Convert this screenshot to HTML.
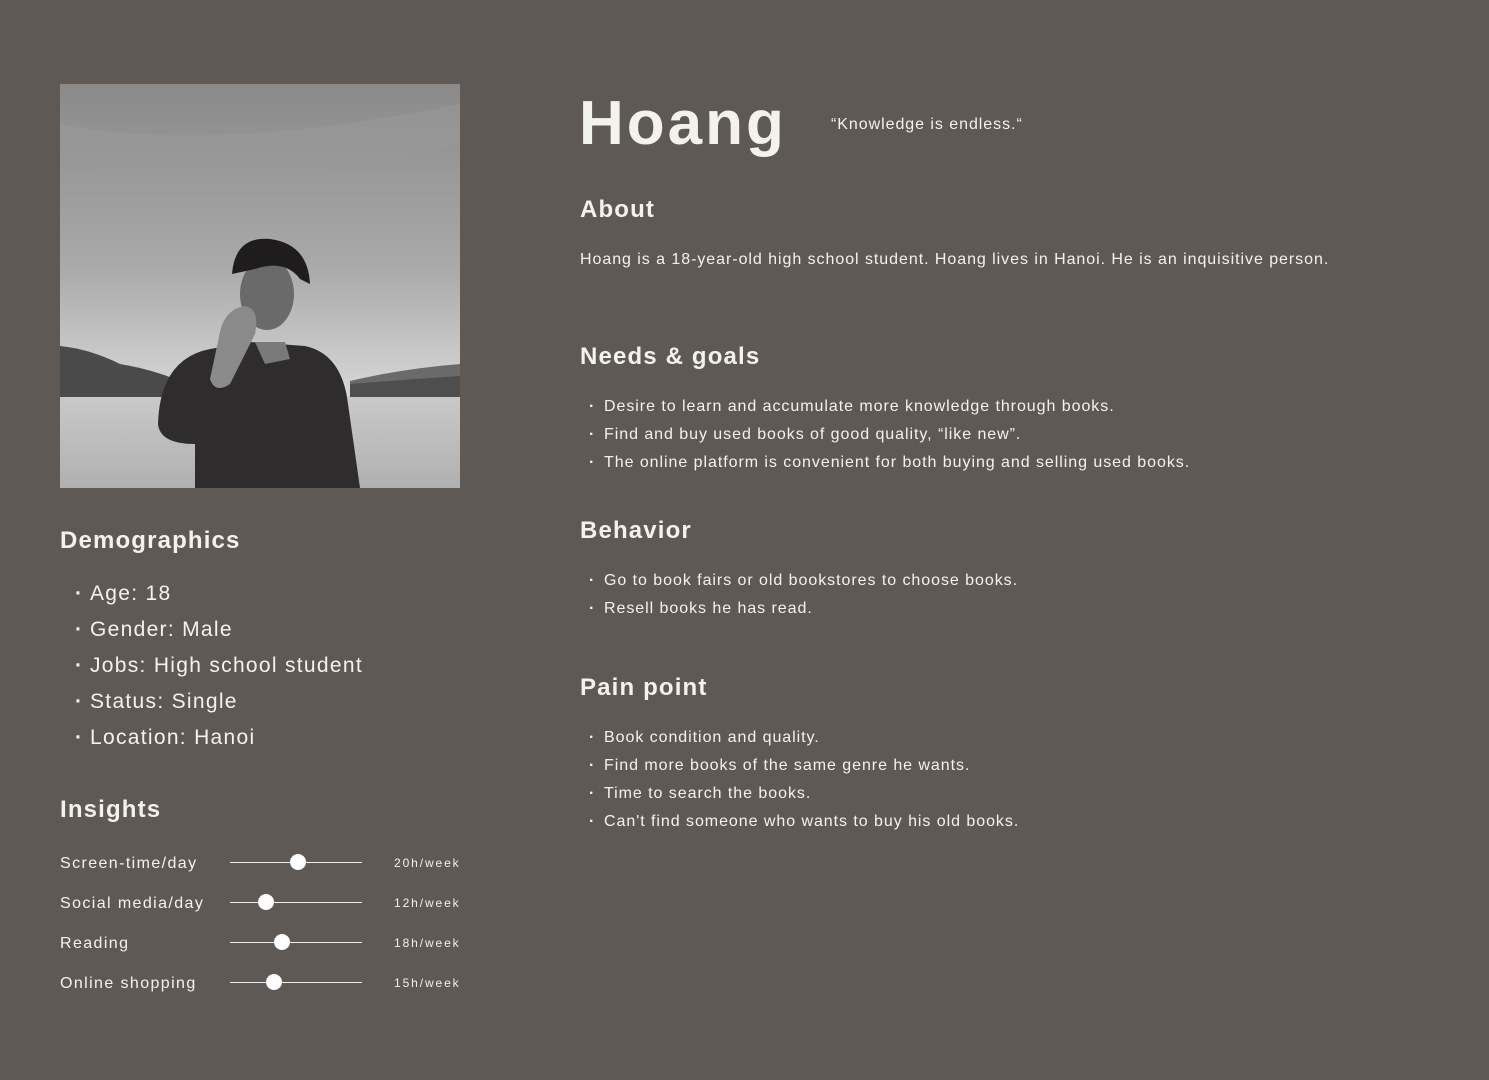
<!DOCTYPE html>
<html><head><meta charset="utf-8"><style>
*{margin:0;padding:0;box-sizing:border-box}
body{width:1489px;height:1080px;background:#5e5955;font-family:"Liberation Sans",sans-serif;color:#f4f2ef;position:relative;overflow:hidden}
.a{position:absolute;white-space:nowrap}
h1{font-size:62px;font-weight:bold;letter-spacing:3px}
.h{font-size:24px;font-weight:bold;letter-spacing:1.15px}
.t{font-size:16px;letter-spacing:.95px}
.d{font-size:21px;letter-spacing:1.3px}
.b::before{content:"·";position:absolute;left:-15px;font-weight:bold}
.s{font-size:16px;letter-spacing:1.4px}
.sl{position:absolute;left:230px;width:132px;height:1px;background:#eee}
.k{position:absolute;width:16px;height:16px;border-radius:50%;background:#fff;top:-8px}
.w{font-size:12px;left:394px;letter-spacing:1.9px}
</style></head><body>
<svg class="a" style="left:60px;top:84px" width="400" height="404" viewBox="0 0 400 404">
<defs><linearGradient id="sk" x1="0" y1="0" x2="0" y2="1"><stop offset="0" stop-color="#8a8a8a"/><stop offset=".45" stop-color="#a9a9a9"/><stop offset=".75" stop-color="#d4d4d4"/></linearGradient>
<linearGradient id="wa" x1="0" y1="0" x2="0" y2="1"><stop offset="0" stop-color="#c9c9c9"/><stop offset="1" stop-color="#b0b0b0"/></linearGradient></defs>
<rect width="400" height="404" fill="url(#sk)"/>
<path d="M0 40 Q150 70 400 20 L400 60 Q200 110 0 80Z" fill="#9a9a9a" opacity=".5"/>
<path d="M0 262 Q30 265 60 280 Q90 285 115 295 L115 313 L0 313Z" fill="#4a4a4a"/>
<path d="M290 297 Q340 285 400 280 L400 318 L290 318Z" fill="#6a6a6a"/>
<path d="M290 300 Q340 296 400 292 L400 318 L290 318Z" fill="#4e4e4e"/>
<rect y="313" width="400" height="91" fill="url(#wa)"/>
<path d="M98 340 Q100 275 150 265 L190 258 L245 262 Q282 270 288 320 L300 404 L135 404 L135 360 Q100 360 98 340Z" fill="#2e2c2c"/>
<path d="M195 258 L225 258 L230 275 L205 280Z" fill="#7a7a7a"/>
<ellipse cx="207" cy="210" rx="27" ry="36" fill="#6a6a6a"/>
<path d="M172 190 Q175 152 210 155 Q248 160 250 200 L240 195 Q225 175 195 185 Z" fill="#1e1c1c"/>
<path d="M160 248 Q165 225 185 222 Q200 225 195 250 L170 300 Q155 310 150 295Z" fill="#8a8a8a"/>
</svg>
<h1 class="a" style="left:579px;top:88px">Hoang</h1>
<div class="a t" style="left:831px;top:116px">“Knowledge is endless.“</div>
<div class="a h" style="left:580px;top:196px">About</div>
<div class="a t" style="left:580px;top:251px">Hoang is a 18-year-old high school student. Hoang lives in Hanoi. He is an inquisitive person.</div>
<div class="a h" style="left:580px;top:343px">Needs &amp; goals</div>
<div class="a t b" style="left:604px;top:398px">Desire to learn and accumulate more knowledge through books.</div>
<div class="a t b" style="left:604px;top:426px">Find and buy used books of good quality, “like new”.</div>
<div class="a t b" style="left:604px;top:454px">The online platform is convenient for both buying and selling used books.</div>
<div class="a h" style="left:580px;top:517px">Behavior</div>
<div class="a t b" style="left:604px;top:572px">Go to book fairs or old bookstores to choose books.</div>
<div class="a t b" style="left:604px;top:600px">Resell books he has read.</div>
<div class="a h" style="left:580px;top:674px">Pain point</div>
<div class="a t b" style="left:604px;top:729px">Book condition and quality.</div>
<div class="a t b" style="left:604px;top:757px">Find more books of the same genre he wants.</div>
<div class="a t b" style="left:604px;top:785px">Time to search the books.</div>
<div class="a t b" style="left:604px;top:813px">Can't find someone who wants to buy his old books.</div>
<div class="a h" style="left:60px;top:527px">Demographics</div>
<div class="a d b" style="left:90px;top:582px">Age: 18</div>
<div class="a d b" style="left:90px;top:618px">Gender: Male</div>
<div class="a d b" style="left:90px;top:654px">Jobs: High school student</div>
<div class="a d b" style="left:90px;top:690px">Status: Single</div>
<div class="a d b" style="left:90px;top:726px">Location: Hanoi</div>
<div class="a h" style="left:60px;top:796px">Insights</div>
<div class="a s" style="left:60px;top:855px">Screen-time/day</div>
<div class="sl" style="top:862px"><div class="k" style="left:60px"></div></div>
<div class="a w" style="top:856px">20h/week</div>
<div class="a s" style="left:60px;top:895px">Social media/day</div>
<div class="sl" style="top:902px"><div class="k" style="left:28px"></div></div>
<div class="a w" style="top:896px">12h/week</div>
<div class="a s" style="left:60px;top:935px">Reading</div>
<div class="sl" style="top:942px"><div class="k" style="left:44px"></div></div>
<div class="a w" style="top:936px">18h/week</div>
<div class="a s" style="left:60px;top:975px">Online shopping</div>
<div class="sl" style="top:982px"><div class="k" style="left:36px"></div></div>
<div class="a w" style="top:976px">15h/week</div>
</body></html>
